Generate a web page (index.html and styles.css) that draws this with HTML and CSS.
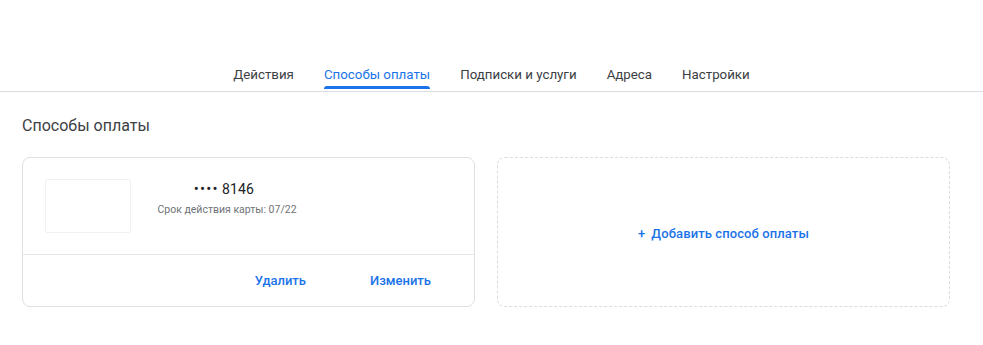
FILE: index.html
```html
<!DOCTYPE html>
<html lang="ru">
<head>
<meta charset="utf-8">
<link rel="stylesheet" href="styles.css">
</head>
<body>
<nav class="tabs">
  <a class="tab">Действия</a>
  <a class="tab active">Способы оплаты</a>
  <a class="tab">Подписки и услуги</a>
  <a class="tab">Адреса</a>
  <a class="tab">Настройки</a>
</nav>
<main class="content">
  <h1 class="title">Способы оплаты</h1>
  <div class="cards">
    <div class="card">
      <div class="card-top">
        <div class="card-image"></div>
        <div class="card-info">
          <div class="card-number"><span class="dots">••••</span>8146</div>
          <div class="card-exp">Срок действия карты: 07/22</div>
        </div>
      </div>
      <div class="card-actions">
        <a class="btn btn-delete">Удалить</a>
        <a class="btn btn-edit">Изменить</a>
      </div>
    </div>
    <div class="card-add">
      <a class="add-link"><span class="plus">+</span>Добавить способ оплаты</a>
    </div>
  </div>
</main>
</body>
</html>
```
FILE: styles.css
```css
html, body {
  margin: 0;
  padding: 0;
  background: #fff;
}
body {
  font-family: Roboto, "Noto Sans", Arial, sans-serif;
  color: #202124;
}
.tabs {
  margin-top: 62px;
  display: flex;
  justify-content: center;
  gap: 30px;
  border-bottom: 1px solid #dadce0;
  height: 29px;
}
.tab {
  position: relative;
  font-size: 13.3px;
  line-height: 26px;
  color: #3c4043;
  cursor: pointer;
}
.tab.active {
  color: #1a73e8;
}
.tab.active::after {
  content: "";
  position: absolute;
  left: 0;
  right: 0;
  bottom: 2px;
  height: 3px;
  background: #1a73e8;
  border-radius: 3px 3px 0 0;
}
.content {
  padding: 0 33px 0 22px;
}
.title {
  margin: 23px 0 20px;
  font-size: 16px;
  font-weight: 400;
  line-height: 22px;
  color: #3c4043;
}
.cards {
  display: grid;
  grid-template-columns: 453px 453px;
  gap: 22px;
}
.card {
  border: 1px solid #e0e0e0;
  border-radius: 8px;
  height: 148px;
  display: flex;
  flex-direction: column;
}
.card-top {
  height: 97px;
  display: flex;
  border-bottom: 1px solid #e8e8e8;
  padding: 21px 0 0 22px;
  box-sizing: border-box;
}
.card-image {
  width: 84px;
  height: 52px;
  border: 1px solid #f1f1f1;
  border-radius: 2px;
}
.card-info {
  margin-left: 26px;
  display: flex;
  flex-direction: column;
  align-items: center;
  width: 140px;
}
.card-number {
  font-size: 14px;
  line-height: 20px;
  color: #202124;
  letter-spacing: 0.2px;
  margin-right: 6px;
}
.dots {
  letter-spacing: 1.2px;
  font-size: 15px;
  margin-right: 3px;
}
.card-exp {
  margin-top: 3px;
  font-size: 10.5px;
  line-height: 16px;
  color: #6f7377;
}
.card-actions {
  flex: 1;
  display: flex;
  justify-content: flex-end;
  align-items: center;
  padding-right: 43px;
  gap: 64px;
}
.btn {
  font-size: 13px;
  font-weight: 500;
  color: #1a73e8;
  cursor: pointer;
}
.card-add {
  border: 1px dashed #dadce0;
  border-radius: 8px;
  display: flex;
  align-items: center;
  justify-content: center;
  padding-top: 3px;
  height: 145px;
}
.add-link {
  font-size: 13px;
  font-weight: 500;
  color: #1a73e8;
  cursor: pointer;
  letter-spacing: 0.1px;
}
.plus {
  margin-right: 6px;
}
```
